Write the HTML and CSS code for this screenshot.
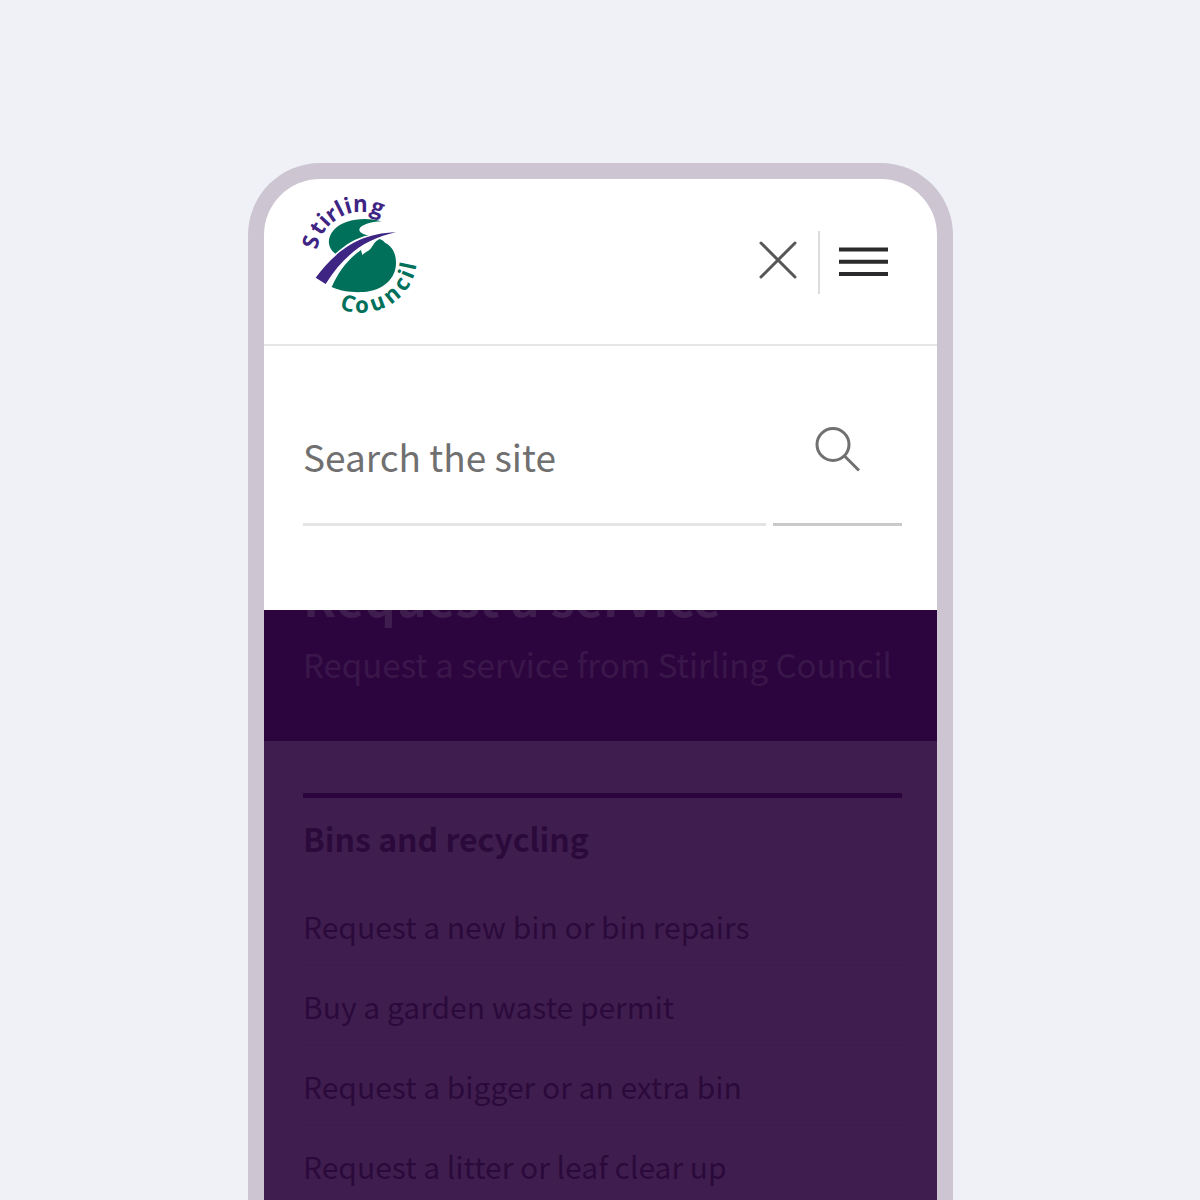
FILE: index.html
```html
<!DOCTYPE html>
<html lang="en">
<head>
<meta charset="utf-8">
<meta name="viewport" content="width=device-width, initial-scale=1">
<title>Request a service - Stirling Council</title>
<link rel="stylesheet" href="styles.css">
</head>
<body>
<div class="phone">
  <header class="header">
    <a class="logo" href="#" aria-label="Stirling Council home">
      <svg viewBox="36 30 348 360" width="116" height="120" aria-hidden="true">
        <path class="logo-green" d="M136 206C114 190 108 160 132 134C160 104 222 94 274 109C244 110 210 121 208 133C207 142 218 149 236 151C198 158 166 180 136 206Z"/>
        <path class="logo-green" d="M125 306C145 262 172 223 213 195L217 210C224 202 236 199 241 192C250 182 253 169 269 162C276 164 281 169 285 173C306 184 318 204 318 234C318 282 278 317 220 321C188 323 152 319 125 306Z"/>
        <path class="logo-purple" d="M77 278C122 220 188 145 318 142C222 162 158 215 107 297Z"/>
        <text class="logo-text logo-purple" x="80 94 111 125 150 170 189 238" y="195 154 128 115 97 88 82 82" rotate="-74 -57 -46 -35 -27 -16 0 20">Stirling</text>
        <text class="logo-text logo-green" x="148 196 249 302 344 367 376" y="372 384 381 360 323 285 258" rotate="15 -2 -20 -39 -56 -68 -78">Council</text>
      </svg>
    </a>
    <div class="actions">
      <button class="icon-button close" type="button" aria-label="Close search">
        <svg viewBox="0 0 40 40" width="40" height="40"><path d="M3 3L37 37M37 3L3 37"/></svg>
      </button>
      <button class="icon-button menu" type="button" aria-label="Menu">
        <svg viewBox="0 0 50 30" width="50" height="30"><path d="M0 3.500H49M0 15.700H49M0 28H49"/></svg>
      </button>
    </div>
  </header>
  <form class="search" role="search">
    <input class="search-input" type="search" placeholder="Search the site" aria-label="Search the site">
    <button class="search-button" type="submit" aria-label="Search">
      <svg viewBox="0 0 46 46" width="46" height="46"><circle cx="18" cy="18.500" r="16"/><path d="M29.500 30L44 44.500"/></svg>
    </button>
  </form>
  <section class="banner">
    <h1 class="title">Request a service</h1>
    <p class="intro">Request a service from Stirling Council</p>
  </section>
  <main class="content">
    <h2 class="heading">Bins and recycling</h2>
    <ul class="links">
      <li><a href="#">Request a new bin or bin repairs</a></li>
      <li><a href="#">Buy a garden waste permit</a></li>
      <li><a href="#">Request a bigger or an extra bin</a></li>
      <li><a href="#">Request a litter or leaf clear up</a></li>
    </ul>
  </main>
</div>
</body>
</html>
```
FILE: styles.css
```css
* { box-sizing: border-box; }

body {
  margin: 0;
  height: 100vh;
  overflow: hidden;
  padding: 163px 247px 0 248px;
  background: #eff1f6;
  font-family: "Noto Sans CJK SC", "Open Sans", sans-serif;
}

.phone {
  border: 16px solid #cdc5d1;
  border-bottom: 0;
  border-radius: 72px 72px 0 0;
  overflow: hidden;
  background: #fff;
}

.header {
  display: flex;
  justify-content: space-between;
  align-items: flex-start;
  height: 167px;
  padding: 16px 48px 0 38px;
  border-bottom: 2px solid #e6e6e6;
}

.logo { display: block; }
.logo svg, .icon-button svg, .search-button svg { display: block; }
.logo-green { fill: #00705a; }
.logo-purple { fill: #3f2583; }
.logo-text { font-family: "Open Sans", sans-serif; font-size: 67px; font-weight: 700; }

.actions { display: flex; align-items: center; padding-top: 36px; }

button { margin: 0; padding: 0; border: 0; background: none; cursor: pointer; }
svg { overflow: visible; }

.icon-button { height: 63px; display: flex; align-items: center; }
.icon-button path { fill: none; stroke-width: 3; }
.close { padding: 0 20px 6px 0; border-right: 2px solid #dcdcdc; }
.close path { stroke: #575757; stroke-linecap: round; }
.menu { padding: 0 0 4px 19px; }
.menu path { stroke: #2b2b2d; stroke-width: 4; }

.search {
  display: flex;
  gap: 7px;
  height: 264px;
  padding: 50px 35px 84px 39px;
}

.search-input {
  flex: 1;
  min-width: 0;
  padding: 0 0 8px;
  border: 0;
  border-bottom: 3px solid #e4e4e4;
  outline: 0;
  background: none;
  font: inherit;
  font-size: 37px;
  color: #707070;
  appearance: none;
}
.search-input::placeholder { color: #707070; opacity: 1; }

.search-button {
  width: 129px;
  padding-bottom: 22px;
  border-bottom: 3px solid #c9c9c9;
}
.search-button svg { margin: 0 auto; }
.search-button circle, .search-button path { fill: none; stroke: #707070; stroke-width: 3; }

.banner {
  display: flex;
  flex-direction: column;
  justify-content: flex-end;
  height: 131px;
  padding: 0 39px 53px;
  overflow: hidden;
  white-space: nowrap;
  background: #2d053e;
}

.title { margin: 0 0 12px; font-size: 49px; line-height: 64px; color: #3f1e4f; }
.intro { margin: 0; font-size: 33px; line-height: 48px; color: #3a174a; }

.content {
  min-height: 100vh;
  padding: 52px 35px 0 39px;
  background: #3f1e4f;
  color: #2b0a3b;
}

.heading {
  margin: 0 0 24px;
  padding-top: 16px;
  border-top: 5px solid #2d053e;
  font-size: 32px;
  line-height: 48px;
}

.links { margin: 0; padding: 0; list-style: none; }
.links li { height: 80px; border-bottom: 1px solid #3c1b4c; }
.links a { display: block; font-size: 30px; line-height: 48px; padding-top: 16px; color: inherit; text-decoration: none; }
```
